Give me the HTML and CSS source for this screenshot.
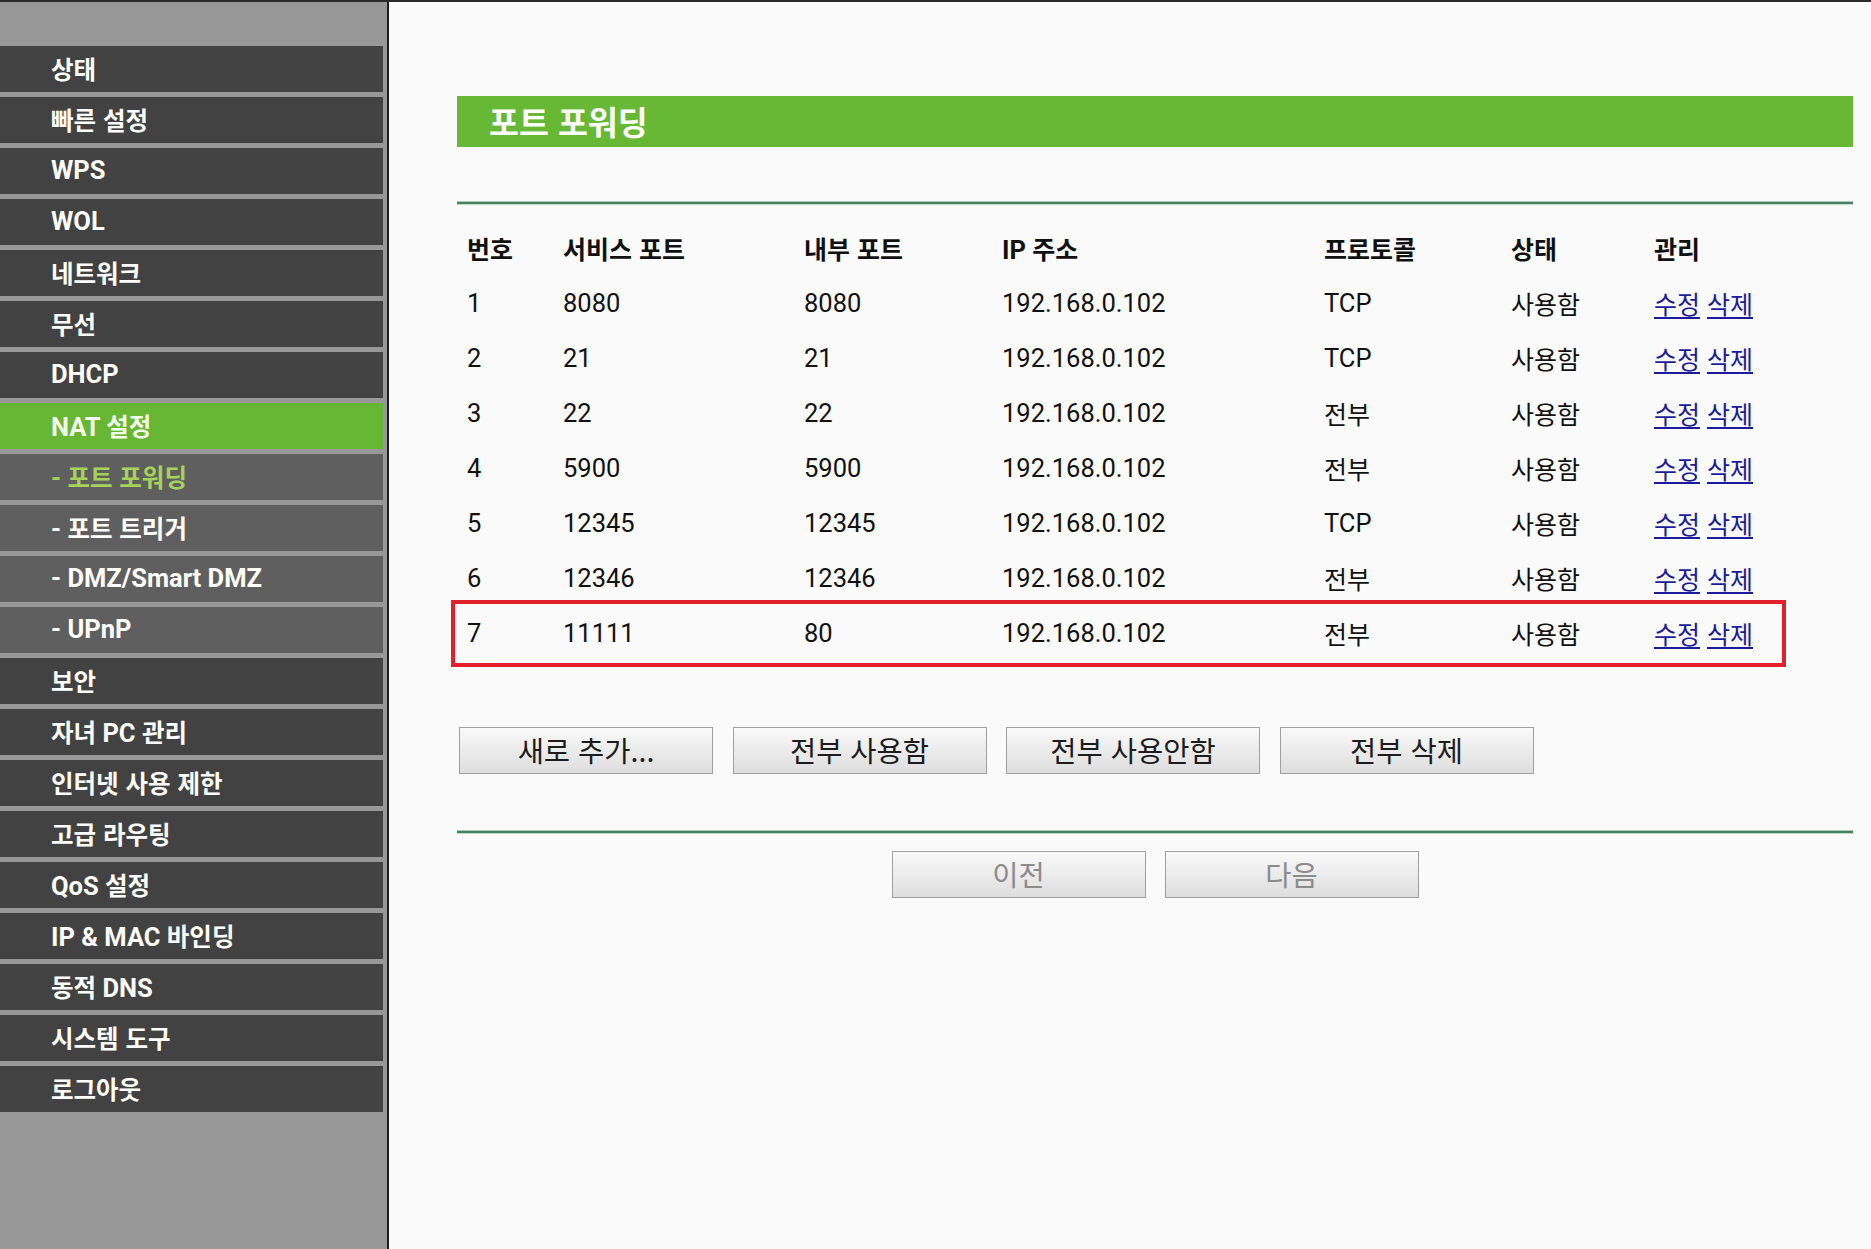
FILE: index.html
```html
<!DOCTYPE html>
<html lang="ko">
<head>
<meta charset="utf-8">
<title>포트 포워딩</title>
<link rel="stylesheet" href="styles.css">
</head>
<body>
<div class="page">
  <nav class="sidebar">
    <div class="nav-item"><span class="k">상태</span></div>
    <div class="nav-item"><span class="k">빠른 설정</span></div>
    <div class="nav-item">WPS</div>
    <div class="nav-item">WOL</div>
    <div class="nav-item"><span class="k">네트워크</span></div>
    <div class="nav-item"><span class="k">무선</span></div>
    <div class="nav-item">DHCP</div>
    <div class="nav-item active">NAT <span class="k">설정</span></div>
    <div class="nav-item sub current">- <span class="k">포트 포워딩</span></div>
    <div class="nav-item sub">- <span class="k">포트 트리거</span></div>
    <div class="nav-item sub">- DMZ/Smart DMZ</div>
    <div class="nav-item sub">- UPnP</div>
    <div class="nav-item"><span class="k">보안</span></div>
    <div class="nav-item"><span class="k">자녀</span> PC <span class="k">관리</span></div>
    <div class="nav-item"><span class="k">인터넷 사용 제한</span></div>
    <div class="nav-item"><span class="k">고급 라우팅</span></div>
    <div class="nav-item">QoS <span class="k">설정</span></div>
    <div class="nav-item">IP &amp; MAC <span class="k">바인딩</span></div>
    <div class="nav-item"><span class="k">동적</span> DNS</div>
    <div class="nav-item"><span class="k">시스템 도구</span></div>
    <div class="nav-item"><span class="k">로그아웃</span></div>
  </nav>
  <main class="main">
    <h1 class="title">포트 포워딩</h1>
    <div class="sep"></div>
    <div class="table">
      <div class="row head">
        <div class="k">번호</div>
        <div class="k">서비스 포트</div>
        <div class="k">내부 포트</div>
        <div>IP <span class="k">주소</span></div>
        <div class="k">프로토콜</div>
        <div class="k">상태</div>
        <div class="k">관리</div>
      </div>
      <div class="row">
        <div>1</div><div>8080</div><div>8080</div><div>192.168.0.102</div><div>TCP</div><div class="k">사용함</div>
        <div class="k"><a href="#">수정</a> <a href="#">삭제</a></div>
      </div>
      <div class="row">
        <div>2</div><div>21</div><div>21</div><div>192.168.0.102</div><div>TCP</div><div class="k">사용함</div>
        <div class="k"><a href="#">수정</a> <a href="#">삭제</a></div>
      </div>
      <div class="row">
        <div>3</div><div>22</div><div>22</div><div>192.168.0.102</div><div class="k">전부</div><div class="k">사용함</div>
        <div class="k"><a href="#">수정</a> <a href="#">삭제</a></div>
      </div>
      <div class="row">
        <div>4</div><div>5900</div><div>5900</div><div>192.168.0.102</div><div class="k">전부</div><div class="k">사용함</div>
        <div class="k"><a href="#">수정</a> <a href="#">삭제</a></div>
      </div>
      <div class="row">
        <div>5</div><div>12345</div><div>12345</div><div>192.168.0.102</div><div>TCP</div><div class="k">사용함</div>
        <div class="k"><a href="#">수정</a> <a href="#">삭제</a></div>
      </div>
      <div class="row">
        <div>6</div><div>12346</div><div>12346</div><div>192.168.0.102</div><div class="k">전부</div><div class="k">사용함</div>
        <div class="k"><a href="#">수정</a> <a href="#">삭제</a></div>
      </div>
      <div class="row marked">
        <div>7</div><div>11111</div><div>80</div><div>192.168.0.102</div><div class="k">전부</div><div class="k">사용함</div>
        <div class="k"><a href="#">수정</a> <a href="#">삭제</a></div>
      </div>
    </div>
    <div class="actions">
      <button class="btn">새로 추가...</button>
      <button class="btn">전부 사용함</button>
      <button class="btn">전부 사용안함</button>
      <button class="btn">전부 삭제</button>
    </div>
    <div class="sep sep2"></div>
    <div class="pager">
      <button class="btn disabled">이전</button>
      <button class="btn disabled">다음</button>
    </div>
  </main>
</div>
</body>
</html>
```
FILE: styles.css
```css
html, body {
  margin: 0;
  padding: 0;
}
body {
  background: #fafafa;
  font-family: Roboto, "Noto Sans CJK KR", sans-serif;
  color: #111;
}
.k {
  font-family: "Noto Sans CJK KR", Roboto, sans-serif;
}
.page {
  display: flex;
  border-top: 2px solid #2a2a2a;
  min-height: 1247px;
}
.sidebar {
  width: 387px;
  flex: none;
  background: #989898;
  border-right: 2px solid #1e1e1e;
  padding-top: 44px;
  box-sizing: content-box;
}
.nav-item {
  width: 383px;
  height: 46px;
  margin-bottom: 5px;
  box-sizing: border-box;
  padding-left: 51px;
  background: #424242;
  color: #fff;
  font-weight: 700;
  font-size: 25.5px;
  line-height: 45px;
  white-space: nowrap;
}
.nav-item .k {
  font-size: 24.5px;
}
.nav-item.sub {
  background: #5f5f5f;
}
.nav-item.active {
  background: #67b734;
  color: #f4fbea;
}
.nav-item.current {
  color: #a6d25a;
}
.main {
  flex: 1;
  padding: 94px 18px 0 68px;
  min-width: 0;
}
.title {
  margin: 0;
  height: 51px;
  background: #67b835;
  color: #fff;
  font-family: "Noto Sans CJK KR", sans-serif;
  font-size: 32.5px;
  font-weight: 700;
  line-height: 49px;
  padding-left: 32px;
}
.sep {
  margin-top: 54px;
  height: 2px;
  background: #4a7f63;
  border-top: 1px solid #a9cdb8;
  border-bottom: 1px solid #b8dcc7;
}
.table {
  margin-top: 16px;
}
.row {
  position: relative;
  display: grid;
  grid-template-columns: 96px 241px 198px 322px 187px 143px 1fr;
  padding-left: 10px;
  height: 55px;
  line-height: 55px;
  font-size: 25.5px;
  white-space: nowrap;
}
.row .k {
  font-size: 25px;
}
.row.head {
  font-weight: 700;
}
.row.marked::after {
  content: "";
  position: absolute;
  left: -6px;
  right: 67px;
  top: -6px;
  bottom: -6px;
  border: 4px solid #e0202b;
  pointer-events: none;
}
.row a {
  color: #1b1b9c;
  text-decoration: underline;
  text-underline-offset: 3px;
}
.actions {
  margin-top: 66px;
  padding-left: 2px;
  display: flex;
  gap: 19.5px;
}
.btn {
  width: 254px;
  height: 47px;
  margin: 0;
  padding: 0;
  border: 1px solid #9f9f9f;
  border-radius: 0;
  background: linear-gradient(#f9f9f9, #dedede);
  font-family: "Noto Sans CJK KR", Roboto, sans-serif;
  font-size: 28.5px;
  color: #1c1c1c;
  line-height: 1;
}
.btn.disabled {
  color: #8c8c8c;
}
.sep2 {
  margin-top: 56px;
}
.pager {
  margin-top: 17px;
  display: flex;
  justify-content: center;
  gap: 19px;
}
```
